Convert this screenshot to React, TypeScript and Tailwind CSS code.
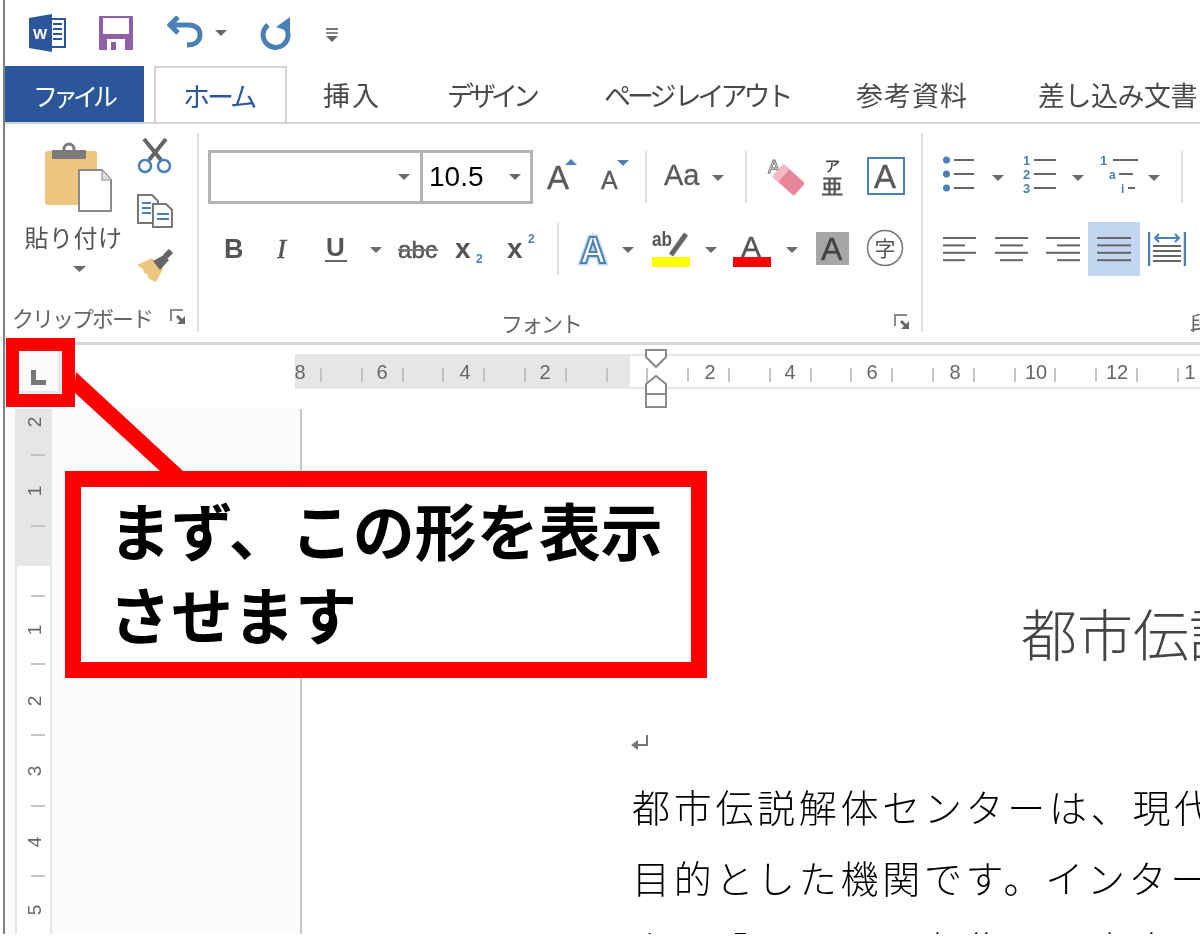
import React from "react";

const BLUE = "#4a80b5";
const GR = "#5a5a5a";

function Ic({ w, h = 54, className = "", children }: { w: number; h?: number; className?: string; children?: React.ReactNode }) {
  return (
    <svg width={w} height={h} viewBox={`0 0 ${w} ${h}`} className={"shrink-0 " + className} fontFamily="Liberation Sans, sans-serif">
      {children}
    </svg>
  );
}

function Arrow({ className = "" }: { className?: string }) {
  return (
    <Ic w={12} className={className}>
      <polygon points="0,25 12,25 6,31" fill="#6a6a6a" />
    </Ic>
  );
}

function Launcher({ className = "" }: { className?: string }) {
  return (
    <svg width="17" height="16" viewBox="0 0 17 16" className={"shrink-0 " + className}>
      <path d="M1 12V1H13" fill="none" stroke="#8a8a8a" strokeWidth="2" />
      <polygon points="8,6 12,10 15,7 15,15 7,15 10,12 6,8" fill="#666" />
    </svg>
  );
}

const Sep = ({ className = "" }: { className?: string }) => <div className={"w-[2px] h-[52px] bg-[#e1e1e1] shrink-0 " + className} />;

function Lines({ w, rows }: { w: number; rows: [number, number][] }) {
  return (
    <Ic w={w}>
      {rows.map(([x1, x2], i) => (
        <rect key={i} x={x1} y={15 + i * 7.4} width={x2 - x1} height="2" fill="#666" />
      ))}
    </Ic>
  );
}

const rulerNums = [
  { x: 5, t: "8" }, { x: 87, t: "6" }, { x: 170, t: "4" }, { x: 250, t: "2" },
  { x: 415, t: "2" }, { x: 495, t: "4" }, { x: 577, t: "6" }, { x: 660, t: "8" },
  { x: 741, t: "10" }, { x: 822, t: "12" }, { x: 895, t: "1" },
];
const hTicks = Array.from({ length: 22 }, (_, i) => 25 + i * 40.8).filter((x) => x < 895);
const vNums = [
  { y: 13, t: "2" }, { y: 82, t: "1" }, { y: 221, t: "1" }, { y: 292, t: "2" },
  { y: 362, t: "3" }, { y: 433, t: "4" }, { y: 501, t: "5" },
];
const vTicks = [45, 116, 186, 254, 325, 396, 466];

const tabs = [
  { t: "挿入", c: "ml-[36px] w-[57px] tracking-[2px]" },
  { t: "デザイン", c: "ml-[67px] w-[90px] tracking-[-5px]" },
  { t: "ページ レイアウト", c: "ml-[67px] w-[186px] tracking-[-4px]" },
  { t: "参考資料", c: "ml-[66px] w-[114px] tracking-[1px]" },
  { t: "差し込み文書", c: "ml-[68px] w-[180px] tracking-[-0.5px]" },
];

export default function App() {
  return (
    <div className="relative w-[1200px] h-[936px] overflow-hidden bg-white font-['Noto_Sans_CJK_JP','Liberation_Sans',sans-serif]">
      <div className="ml-[3px] h-[934px] border-l-2 border-[#808080] flex flex-col blur-[0.5px]">
        {/* Quick access */}
        <div className="h-[66px] shrink-0 flex items-start">
          <svg width="38" height="38" viewBox="0 0 38 38" className="ml-[24px] mt-[14px] shrink-0" fontFamily="Liberation Sans, sans-serif">
            <rect x="13" y="5" width="23" height="28" fill="#fff" stroke="#2b579a" strokeWidth="2" />
            <path d="M24 10h9M24 15h9M24 20h9M24 25h9" stroke="#2b579a" strokeWidth="2" />
            <polygon points="0,4 23,0 23,38 0,34" fill="#2b579a" />
            <text x="4" y="25" fontSize="15" fontWeight="700" fill="#fff">W</text>
          </svg>
          <svg width="34" height="34" viewBox="0 0 34 34" className="ml-[32px] mt-[16px] shrink-0">
            <rect width="34" height="34" rx="1" fill="#8f5fa8" />
            <rect x="4" y="2" width="26" height="16" fill="#fff" />
            <rect x="8" y="23" width="18" height="11" fill="#fff" />
            <rect x="12" y="26" width="5" height="8" fill="#8f5fa8" />
          </svg>
          <svg width="36" height="32" viewBox="0 0 36 32" className="ml-[34px] mt-[16px] shrink-0" fill="none" stroke={BLUE} strokeWidth="5">
            <path d="M11 1 3 9l8 8" />
            <path d="M3 9h18c8 0 12 4 12 10s-5 10-13 10" />
          </svg>
          <Ic w={12} h={54} className="ml-[12px] mt-[5px]">
            <polygon points="0,25 12,25 6,31" fill="#6a6a6a" />
          </Ic>
          <svg width="32" height="34" viewBox="0 0 32 34" className="ml-[32px] mt-[16px] shrink-0" fill="none">
            <path d="M9 9A12.5 12.5 0 1 0 27 12" stroke={BLUE} strokeWidth="5" />
            <polygon points="31,1 31,16 17,11" fill={BLUE} />
          </svg>
          <svg width="14" height="15" viewBox="0 0 14 15" className="ml-[34px] mt-[27px] shrink-0">
            <rect x="1" y="1" width="12" height="2" fill="#777" />
            <rect x="1" y="5" width="12" height="2" fill="#888" />
            <polygon points="1,9 13,9 7,15" fill="#666" />
          </svg>
        </div>

        {/* Tabs */}
        <div className="h-[58px] shrink-0 flex items-stretch border-b-2 border-[#d4d4d4] text-[#4a4a4a] text-[27px] leading-[58px] whitespace-nowrap overflow-hidden">
          <div className="w-[139px] shrink-0 bg-[#2b579a] text-white text-[25px] pl-[28px] tracking-[-5px]">ファイル</div>
          <div className="ml-[10px] w-[133px] h-[58px] shrink-0 border-2 border-b-0 border-[#d4d4d4] bg-white text-[#2b579a] pl-[27px] tracking-[-3px] leading-[56px]">ホーム</div>
          {tabs.map((t) => (
            <div key={t.t} className={"shrink-0 " + t.c}>{t.t}</div>
          ))}
        </div>

        {/* Ribbon */}
        <div className="h-[222px] shrink-0 flex items-start border-b-[3px] border-[#d4d4d4] -mt-[1px]">
          {/* Clipboard */}
          <div className="w-[194px] h-[199px] mt-[10px] border-r-2 border-[#e1e1e1] shrink-0 flex flex-col">
            <div className="h-[174px] flex">
              <div className="ml-[15px] w-[107px] flex flex-col items-center pt-[9px]">
                <svg width="107" height="71" viewBox="0 0 107 71" className="shrink-0">
                  <path d="M28 9h46a3 3 0 0 1 3 3v48a3 3 0 0 1-3 3H28a3 3 0 0 1-3-3V12a3 3 0 0 1 3-3z" fill="#ecc581" />
                  <rect x="32" y="8" width="34" height="9" rx="1" fill="#7b7b7b" />
                  <circle cx="49" cy="7" r="5" fill="none" stroke="#7b7b7b" strokeWidth="3" />
                  <path d="M59 28h23l9 10v31H59z" fill="#fff" stroke="#8a8a8a" strokeWidth="2" />
                  <path d="M82 28v10h9" fill="#ddd" stroke="#aaa" strokeWidth="1.5" />
                </svg>
                <div className="mt-[9px] text-[24px] leading-[30px] text-[#555] tracking-[0.5px] whitespace-nowrap">貼り付け</div>
                <svg width="13" height="6" viewBox="0 0 13 6" className="mt-[14px] ml-[12px]"><polygon points="0,0 13,0 6.5,6" fill="#6a6a6a" /></svg>
              </div>
              <div className="ml-[10px] w-[40px] flex flex-col pt-[5px]">
                <svg width="36" height="36" viewBox="0 0 36 36" className="shrink-0">
                  <path d="M7 1 24 22M29 1 12 22" stroke="#666" strokeWidth="4" fill="none" />
                  <circle cx="8" cy="28" r="6" fill="none" stroke={BLUE} strokeWidth="2.5" />
                  <circle cx="27" cy="28" r="6" fill="none" stroke={BLUE} strokeWidth="2.5" />
                </svg>
                <svg width="37" height="34" viewBox="0 0 37 34" className="mt-[20px] shrink-0">
                  <path d="M1 1h14l6 6v22H1z" fill="#fff" stroke="#777" strokeWidth="2" />
                  <path d="M5 9h9M5 14h9M5 19h9" stroke={BLUE} strokeWidth="2" />
                  <path d="M16 10h13l6 6v17H16z" fill="#fff" stroke="#777" strokeWidth="2" />
                  <path d="M20 20h12M20 25h12" stroke={BLUE} strokeWidth="2" />
                </svg>
                <svg width="38" height="34" viewBox="0 0 38 34" className="mt-[21px] shrink-0">
                  <polygon points="0,16 15,9 26,20 19,33 12,30 10,25 7,24 6,20" fill="#ecc581" />
                  <path d="M16 12 27 6 32 11 23 21z" fill="#666" />
                  <path d="M28 8 34 2" stroke="#666" strokeWidth="6" />
                </svg>
              </div>
            </div>
            <div className="h-[30px] flex items-center">
              <div className="ml-[7px] w-[142px] text-[22px] leading-[30px] text-[#666] tracking-[-2px] whitespace-nowrap">クリップボード</div>
              <Launcher className="ml-[16px]" />
            </div>
          </div>

          {/* Font */}
          <div className="w-[724px] h-[199px] mt-[10px] border-r-2 border-[#e1e1e1] shrink-0 flex flex-col pt-[17px]">
            <div className="h-[54px] flex items-center">
              <div className="ml-[9px] w-[215px] h-[54px] border-[3px] border-[#b4b4b4] flex items-center justify-end pr-[10px] shrink-0">
                <svg width="12" height="6" viewBox="0 0 12 6"><polygon points="0,0 12,0 6,6" fill="#6a6a6a" /></svg>
              </div>
              <div className="w-[110px] h-[54px] border-[3px] border-l-0 border-[#b4b4b4] flex items-center justify-between pl-[6px] pr-[9px] shrink-0">
                <span className="text-[28px] leading-none text-black font-['Liberation_Sans',sans-serif]">10.5</span>
                <svg width="12" height="6" viewBox="0 0 12 6"><polygon points="0,0 12,0 6,6" fill="#6a6a6a" /></svg>
              </div>
              <Ic w={34} className="ml-[14px]">
                <text x="0" y="39" fontSize="33" fill={GR} stroke={GR} strokeWidth="0.4">A</text>
                <polygon points="18,15 30,15 24,9" fill={BLUE} />
              </Ic>
              <Ic w={32} className="ml-[19px]">
                <text x="1" y="39" fontSize="25" fill={GR} stroke={GR} strokeWidth="0.4">A</text>
                <polygon points="17,10 29,10 23,16" fill={BLUE} />
              </Ic>
              <Sep className="ml-[13px]" />
              <Ic w={38} className="ml-[17px]">
                <text x="0" y="35" fontSize="29" fill={GR} stroke={GR} strokeWidth="0.3">Aa</text>
              </Ic>
              <Arrow className="ml-[10px]" />
              <Sep className="ml-[21px]" />
              <Ic w={38} className="ml-[19px]">
                <text x="2" y="23" fontSize="18" fill="none" stroke="#666" strokeWidth="0.8">A</text>
                <g transform="rotate(42 22 30)">
                  <rect x="8" y="21" width="29" height="17" rx="2" fill="#e8879a" />
                  <rect x="8" y="21" width="8" height="17" fill="#f3b9c4" />
                </g>
              </Ic>
              <Ic w={22} className="ml-[18px]">
                <text x="3" y="21" fontSize="15" fontWeight="700" fill="#444">ア</text>
                <text x="0" y="44" fontSize="21" fontWeight="700" fill="#555">亜</text>
              </Ic>
              <Ic w={38} className="ml-[23px]">
                <rect x="1" y="8" width="36" height="36" fill="#fff" stroke={BLUE} strokeWidth="2" />
                <text x="7" y="38" fontSize="33" fill={GR} stroke={GR} strokeWidth="0.4">A</text>
              </Ic>
            </div>
            <div className="h-[54px] mt-[18px] flex items-center">
              <Ic w={18} className="ml-[25px]"><text x="0" y="36" fontSize="27" fontWeight="700" fill="#555">B</text></Ic>
              <Ic w={16} className="ml-[35px]"><text x="0" y="36" fontSize="27" fontStyle="italic" fontFamily="Liberation Serif, serif" fill="#555" stroke="#555" strokeWidth="0.6">I</text></Ic>
              <Ic w={22} className="ml-[32px]">
                <text x="1" y="34" fontSize="26" fontWeight="700" fill="#555">U</text>
                <rect x="0" y="38" width="22" height="2" fill="#666" />
              </Ic>
              <Arrow className="ml-[23px]" />
              <Ic w={40} className="ml-[16px]">
                <text x="0" y="36" fontSize="24" fill="#555" textLength="39" lengthAdjust="spacingAndGlyphs" stroke="#555" strokeWidth="0.5">abc</text>
                <rect x="0" y="27" width="40" height="2" fill="#777" />
              </Ic>
              <Ic w={30} className="ml-[17px]">
                <text x="0" y="36" fontSize="28" fontWeight="700" fill="#555">x</text>
                <text x="21" y="41" fontSize="12" fontWeight="700" fill={BLUE}>2</text>
              </Ic>
              <Ic w={30} className="ml-[22px]">
                <text x="0" y="36" fontSize="28" fontWeight="700" fill="#555">x</text>
                <text x="21" y="21" fontSize="12" fontWeight="700" fill={BLUE}>2</text>
              </Ic>
              <Sep className="ml-[20px]" />
              <Ic w={34} className="ml-[18px]">
                <text x="3" y="41" fontSize="36" fontWeight="700" fill="#fff" stroke="#c5daee" strokeWidth="5">A</text>
                <text x="3" y="41" fontSize="36" fontWeight="700" fill="#fff" stroke={BLUE} strokeWidth="2">A</text>
              </Ic>
              <Arrow className="ml-[11px]" />
              <Ic w={38} className="ml-[18px]">
                <text x="0" y="24" fontSize="20" fontWeight="700" fill="#555" textLength="20" lengthAdjust="spacingAndGlyphs">ab</text>
                <path d="M19 33 34 12" stroke="#666" strokeWidth="5" />
                <rect x="0" y="35" width="38" height="10" fill="#ffff00" />
              </Ic>
              <Arrow className="ml-[15px]" />
              <Ic w={38} className="ml-[16px]">
                <text x="8" y="35" fontSize="30" fill="#555" stroke="#555" strokeWidth="0.4">A</text>
                <rect x="0" y="35" width="38" height="10" fill="#ff0000" />
              </Ic>
              <Arrow className="ml-[15px]" />
              <Ic w={33} className="ml-[18px]">
                <rect x="0" y="10" width="33" height="33" fill="#a6a6a6" />
                <text x="5" y="38" fontSize="32" fill="#444" stroke="#444" strokeWidth="0.4">A</text>
              </Ic>
              <Ic w={38} className="ml-[17px]">
                <circle cx="19" cy="26" r="17.5" fill="none" stroke="#777" strokeWidth="1.6" />
                <text x="19" y="34" fontSize="21" fill="#555" textAnchor="middle" fontFamily="Noto Sans CJK JP, sans-serif">字</text>
              </Ic>
            </div>
            <div className="h-[30px] mt-[31px] flex items-center">
              <div className="ml-[302px] w-[80px] text-[22px] leading-[30px] text-[#666] tracking-[-2px] whitespace-nowrap">フォント</div>
              <Launcher className="ml-[313px]" />
            </div>
          </div>

          {/* Paragraph */}
          <div className="flex-1 min-w-0 h-[199px] mt-[10px] flex flex-col pt-[17px] overflow-hidden">
            <div className="h-[54px] flex items-center">
              <Ic w={32} className="ml-[19px]">
                {[10, 24, 38].map((y) => (
                  <g key={y}>
                    <circle cx="4.5" cy={y} r="3.5" fill={BLUE} />
                    <rect x="12" y={y - 1} width="20" height="2" fill="#666" />
                  </g>
                ))}
              </Ic>
              <Arrow className="ml-[18px]" />
              <Ic w={33} className="ml-[19px]">
                {[["1", 15], ["2", 29], ["3", 43]].map(([t, y]) => (
                  <g key={String(t)}>
                    <text x="0" y={Number(y)} fontSize="13" fontWeight="700" fill={BLUE}>{t}</text>
                    <rect x="11" y={Number(y) - 6} width="22" height="2" fill="#666" />
                  </g>
                ))}
              </Ic>
              <Arrow className="ml-[16px]" />
              <Ic w={38} className="ml-[16px]">
                <text x="0" y="15" fontSize="13" fontWeight="700" fill={BLUE}>1</text>
                <rect x="13" y="9" width="25" height="2" fill="#666" />
                <text x="9" y="29" fontSize="12" fontWeight="700" fill={BLUE}>a</text>
                <rect x="19" y="23" width="14" height="2" fill="#666" />
                <text x="21" y="43" fontSize="12" fontWeight="700" fill={BLUE}>i</text>
                <rect x="28" y="37" width="7" height="2" fill="#666" />
              </Ic>
              <Arrow className="ml-[10px]" />
              <Sep className="ml-[21px]" />
            </div>
            <div className="h-[54px] mt-[18px] flex items-center">
              <div className="ml-[20px]"><Lines w={33} rows={[[0, 33], [0, 22], [0, 33], [0, 22]]} /></div>
              <div className="ml-[19px]"><Lines w={33} rows={[[0, 33], [5, 28], [0, 33], [5, 28]]} /></div>
              <div className="ml-[18px]"><Lines w={34} rows={[[0, 34], [11, 34], [0, 34], [11, 34]]} /></div>
              <div className="ml-[8px] w-[52px] h-[54px] bg-[#c3d6f0] flex items-center justify-center shrink-0">
                <Lines w={34} rows={[[0, 34], [0, 34], [0, 34], [0, 34]]} />
              </div>
              <Ic w={38} className="ml-[8px]">
                <path d="M1 10v34M37 10v34" stroke={BLUE} strokeWidth="2.5" />
                <path d="M7 16h24M11 12l-4 4 4 4M27 12l4 4-4 4" stroke={BLUE} strokeWidth="2" fill="none" />
                <path d="M5 24h28M5 29h28M5 34h28M5 39h28" stroke="#666" strokeWidth="2" />
              </Ic>
            </div>
            <div className="h-[30px] mt-[31px] ml-[267px] text-[22px] leading-[30px] text-[#666] whitespace-nowrap">段落</div>
          </div>
        </div>

        {/* Horizontal ruler row */}
        <div className="h-[64px] shrink-0 flex">
          <div className="w-[290px] shrink-0">
            <div className="ml-[14px] mt-[5px] w-[43px] h-[43px] bg-[#fbfbfb] border-r-4 border-b-2 border-[#e6e6e6] relative flex items-end justify-center pb-[6px]">
              <svg width="15" height="15" viewBox="0 0 15 15" className="mr-[1px]"><path d="M0 0h5v10h10v5H0z" fill="#777" /></svg>
            </div>
          </div>
          <div className="relative flex-1 mt-[9px] h-[35px] bg-[#e6e6e6]">
            <div className="absolute left-[335px] right-0 top-[2px] bottom-[2px] bg-white" />
            {hTicks.map((x) => (
              <div key={x} className="absolute top-[14px] w-[2px] h-[14px] bg-[#c4c4c4]" style={{ left: x }} />
            ))}
            {rulerNums.map((n) => (
              <span key={n.x} className="absolute top-[7px] text-[20px] leading-[22px] text-[#666] font-['Liberation_Sans',sans-serif] -translate-x-1/2" style={{ left: n.x }}>{n.t}</span>
            ))}
            <svg width="24" height="60" viewBox="0 0 24 60" className="absolute left-[349px] -top-[5px]">
              <path d="M2 1h20v7l-10 10L2 8z" fill="#fff" stroke="#8a8a8a" strokeWidth="2" />
              <path d="M12 27 22 35v23H2V35z" fill="#fff" stroke="#8a8a8a" strokeWidth="2" />
              <path d="M2 45h20" stroke="#8a8a8a" strokeWidth="2" />
            </svg>
          </div>
        </div>

        {/* Work area */}
        <div className="flex-1 min-h-0 flex bg-[#fbfbfb]">
          <div className="w-[10px] shrink-0" />
          <div className="relative w-[37px] shrink-0 bg-white border-x-2 border-[#e6e6e6]">
            <div className="absolute left-0 right-0 top-0 h-[157px] bg-[#e6e6e6]" />
            {vTicks.map((y) => (
              <div key={y} className="absolute left-[14px] w-[14px] h-[2px] bg-[#c4c4c4]" style={{ top: y }} />
            ))}
            {vNums.map((n) => (
              <span key={n.y + n.t} className="absolute left-[10px] w-[16px] text-center text-[19px] leading-[20px] text-[#666] font-['Liberation_Sans',sans-serif] -rotate-90 -translate-y-1/2" style={{ top: n.y }}>{n.t}</span>
            ))}
          </div>
          <div className="w-[250px] shrink-0 border-r-2 border-[#c8c8c8]" />
          <div className="flex-1 min-w-0 bg-white overflow-hidden whitespace-nowrap text-black">
            <div className="ml-[719px] mt-[188px] text-[56px] leading-[70px] text-[#444] font-light">都市伝説解体センター</div>
            <svg width="20" height="18" viewBox="0 0 20 18" className="ml-[329px] mt-[68px] block">
              <path d="M16 0v10H4" fill="none" stroke="#777" strokeWidth="2" />
              <polygon points="0,10 7,5 7,15" fill="#777" />
            </svg>
            <div className="ml-[330px] mt-[17px] text-[38px] leading-[71px] tracking-[3.7px] font-light">
              <div>都市伝説解体センターは、現代</div>
              <div>目的とした機関です。インターネ</div>
              <div>上の噂や証言を収集し、事実関</div>
            </div>
          </div>
        </div>
      </div>

      {/* Callout overlay */}
      <div className="absolute left-[6px] top-[338px] w-[69px] h-[69px] border-[13px] border-[#ff0000]" />
      <svg width="120" height="110" viewBox="0 0 120 110" className="absolute left-[70px] top-[366px]">
        <polygon points="6,6 113,105 90,105 4,26" fill="#ff0000" />
      </svg>
      <div className="absolute left-[65px] top-[471px] w-[642px] h-[207px] border-[16px] border-[#ff0000] bg-white pl-[28px] text-[62px] leading-[84px] font-bold text-black whitespace-nowrap">
        <div>まず、この形を表示</div>
        <div>させます</div>
      </div>
    </div>
  );
}
